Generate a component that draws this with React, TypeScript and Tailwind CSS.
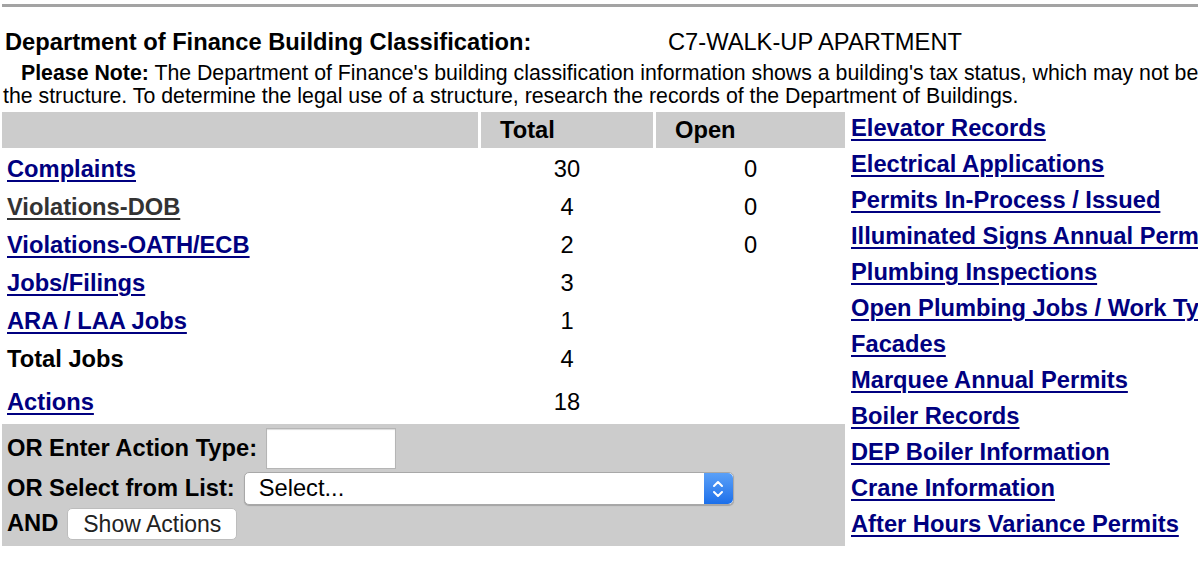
import { ReactNode } from 'react'

type CountRow = {
  label: string
  total: string
  open?: string
  kind: 'link' | 'visited' | 'plain'
  tall?: boolean
}

const COUNT_ROWS: CountRow[] = [
  { label: 'Complaints', total: '30', open: '0', kind: 'link' },
  { label: 'Violations-DOB', total: '4', open: '0', kind: 'visited' },
  { label: 'Violations-OATH/ECB', total: '2', open: '0', kind: 'link' },
  { label: 'Jobs/Filings', total: '3', kind: 'link' },
  { label: 'ARA / LAA Jobs', total: '1', kind: 'link' },
  { label: 'Total Jobs', total: '4', kind: 'plain' },
  { label: 'Actions', total: '18', kind: 'link', tall: true },
]

const SIDE_LINKS = [
  'Elevator Records',
  'Electrical Applications',
  'Permits In-Process / Issued',
  'Illuminated Signs Annual Permits',
  'Plumbing Inspections',
  'Open Plumbing Jobs / Work Types',
  'Facades',
  'Marquee Annual Permits',
  'Boiler Records',
  'DEP Boiler Information',
  'Crane Information',
  'After Hours Variance Permits',
]

const NavLink = ({ children, visited }: { children: ReactNode; visited?: boolean }) => (
  <a
    href="#"
    className={`font-bold underline decoration-2 underline-offset-[3px] ${visited ? 'text-[#333333]' : 'text-[#000080]'}`}
  >
    {children}
  </a>
)

const SelectArrows = () => (
  <div className="flex h-full w-[29px] flex-col items-center justify-center rounded-r-[5px] bg-gradient-to-b from-[#5aa0f7] to-[#1b6fea]">
    <svg width="12" height="20" viewBox="0 0 12 20" fill="none" stroke="white" strokeWidth="2" strokeLinecap="round" strokeLinejoin="round">
      <path d="M2 7 L6 3 L10 7" />
      <path d="M2 13 L6 17 L10 13" />
    </svg>
  </div>
)

export default function App() {
  return (
    <div className="h-[588px] w-[1198px] overflow-hidden bg-white font-['Liberation_Sans',Arial,sans-serif] text-black">
      <div className="ml-[2px] mt-[4px] h-[3px] bg-[#a3a3a3]" />

      {/* building classification */}
      <div className="mt-[21px] flex h-[28px] items-center text-[23.7px] leading-[28px]">
        <div className="w-[668px] pl-[5px] font-bold">Department of Finance Building Classification:</div>
        <div>C7-WALK-UP APARTMENT</div>
      </div>

      <div className="mt-[6px] overflow-hidden whitespace-nowrap pl-[3px] text-[21.3px] leading-[23px]">
        <span className="pl-[18px] font-bold">Please Note:</span> The Department of Finance's building
        classification information shows a building's tax status, which may not be the same as the legal use of
        <br />
        the structure. To determine the legal use of a structure, research the records of the Department of
        Buildings.
      </div>

      <div className="mt-[2px] flex text-[23.7px]">
        {/* counts table */}
        <div className="ml-[2px] w-[843px] shrink-0 pt-[2px]">
          <div className="flex h-[36px] gap-[3px] font-bold leading-[36px]">
            <div className="w-[476px] bg-[#cccccc]" />
            <div className="w-[172px] bg-[#cccccc] pl-[19px]">Total</div>
            <div className="flex-1 bg-[#cccccc] pl-[19px]">Open</div>
          </div>

          {COUNT_ROWS.map((row) => (
            <div key={row.label} className={`flex items-center gap-[3px] ${row.tall ? 'h-[46px] pt-[8px]' : 'h-[38px] pt-[6px]'}`}>
              <div className="w-[476px] pl-[5px]">
                {row.kind === 'plain' ? (
                  <span className="font-bold">{row.label}</span>
                ) : (
                  <NavLink visited={row.kind === 'visited'}>{row.label}</NavLink>
                )}
              </div>
              <div className="w-[172px] text-center">{row.total}</div>
              <div className="flex-1 text-center">{row.open}</div>
            </div>
          ))}

          {/* action search form */}
          <div className="mt-[2px] flex flex-col bg-[#cccccc] pb-[6px] pl-[5px] pt-[4px] font-bold">
            <div className="flex h-[41px] items-center gap-[9px]">
              <span>OR Enter Action Type:</span>
              <div className="h-[41px] w-[130px] border border-[#b5b5b5] bg-white shadow-[inset_0_1px_1px_rgba(0,0,0,0.15)]" />
            </div>
            <div className="mt-[3px] flex h-[33px] items-center gap-[9px]">
              <span>OR Select from List:</span>
              <div className="flex h-[33px] w-[490px] items-center rounded-[5px] border border-[#a8a8a8] bg-white font-normal shadow-[0_1px_1px_rgba(0,0,0,0.2)]">
                <span className="flex-1 pl-[14px] leading-none">Select...</span>
                <SelectArrows />
              </div>
            </div>
            <div className="mt-[3px] flex h-[32px] items-center gap-[9px]">
              <span>AND</span>
              <button className="h-[32px] w-[170px] rounded-[5px] border border-[#bdbdbd] bg-white text-[23px] font-normal leading-none text-[#222]">
                Show Actions
              </button>
            </div>
          </div>
        </div>

        {/* related records */}
        <div className="ml-[6px] flex shrink-0 flex-col whitespace-nowrap pt-[1px]">
          {SIDE_LINKS.map((label) => (
            <div key={label} className="flex h-[36px] items-center">
              <NavLink>{label}</NavLink>
            </div>
          ))}
        </div>
      </div>
    </div>
  )
}
